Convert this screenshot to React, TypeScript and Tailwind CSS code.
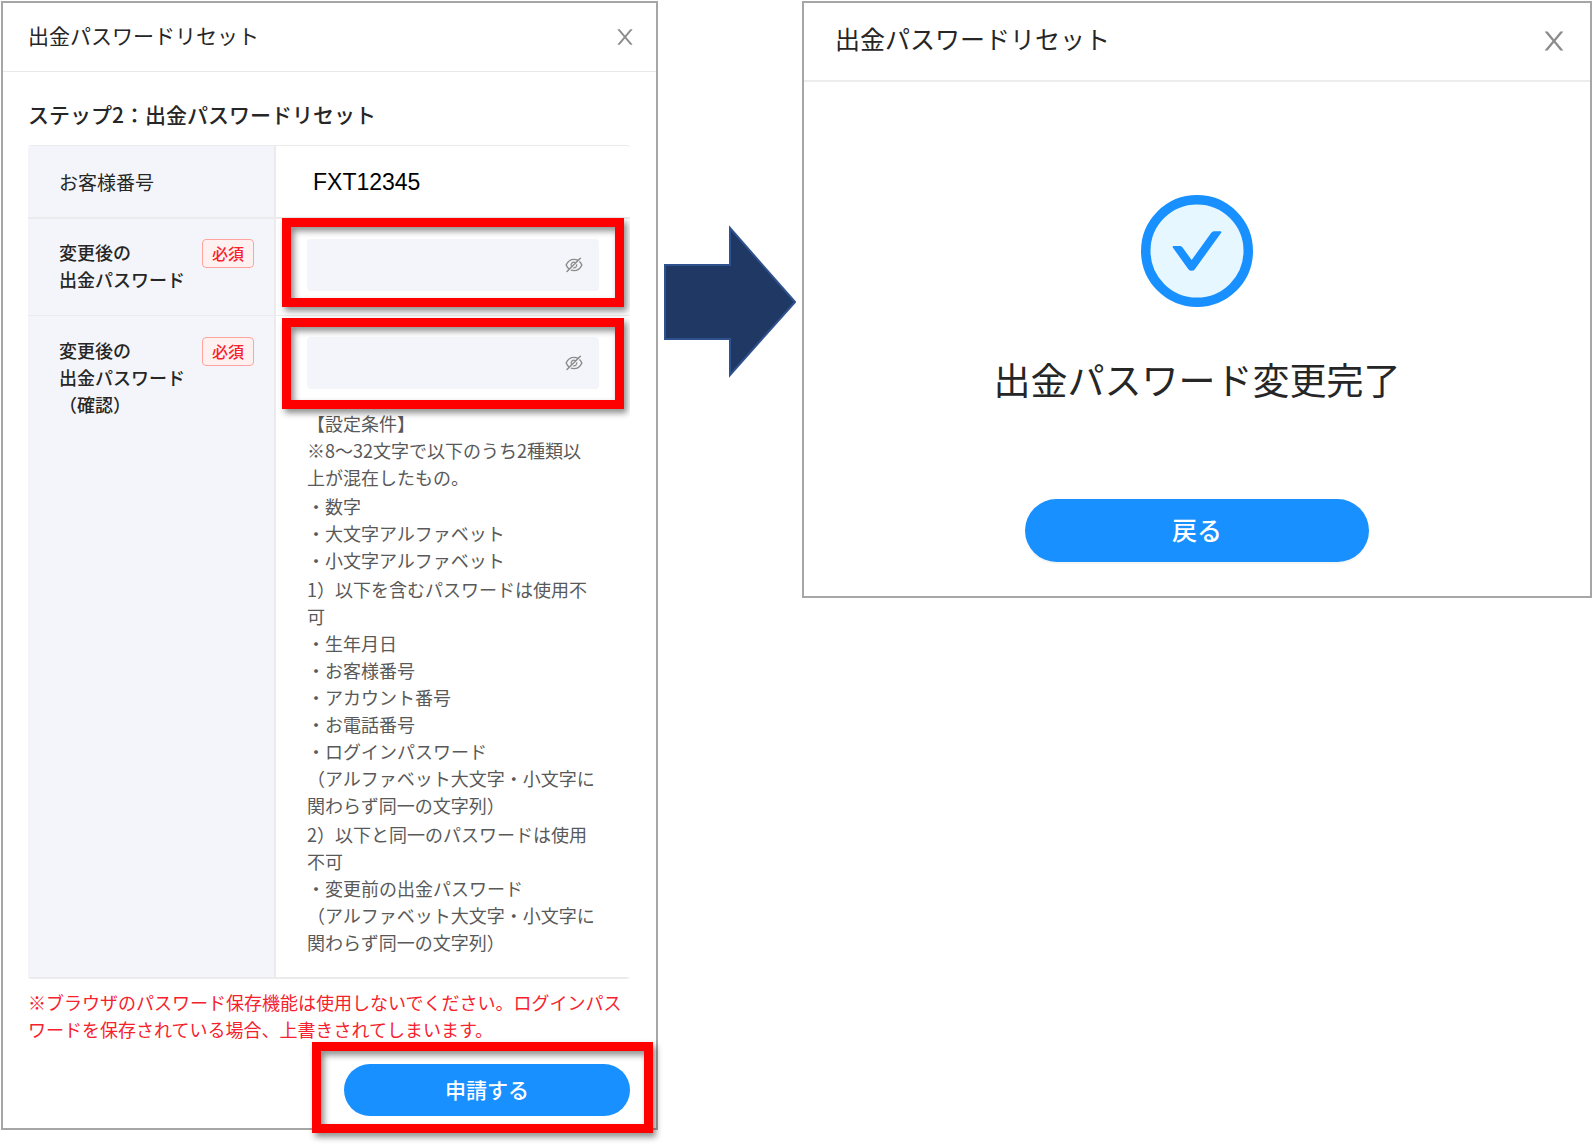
import React, { useState } from "react";
import { AiOutlineEyeInvisible } from "react-icons/ai";

const conditions: string[][] = [
  ["【設定条件】", "※8～32文字で以下のうち2種類以", "上が混在したもの。"],
  ["・数字", "・大文字アルファベット", "・小文字アルファベット"],
  [
    "1）以下を含むパスワードは使用不",
    "可",
    "・生年月日",
    "・お客様番号",
    "・アカウント番号",
    "・お電話番号",
    "・ログインパスワード",
    "（アルファベット大文字・小文字に",
    "関わらず同一の文字列）",
  ],
  [
    "2）以下と同一のパスワードは使用",
    "不可",
    "・変更前の出金パスワード",
    "（アルファベット大文字・小文字に",
    "関わらず同一の文字列）",
  ],
];

export default function App() {
  return (
    <main className="grid min-h-screen grid-cols-[657fr_144fr_790fr] items-start bg-white py-px pl-px font-['Noto_Sans_CJK_JP',sans-serif] text-[#262626]">
      <ResetForm />
      <div className="flex justify-center pt-[224px]">
        <Arrow />
      </div>
      <ResetComplete />
    </main>
  );
}

const ResetForm = () => {
  const [password, setPassword] = useState<string>("");
  const [confirmation, setConfirmation] = useState<string>("");

  return (
    <section className="border-2 border-[#a6a6a6]">
      <header className="flex h-[69px] items-start justify-between border-b border-[#e8e8e8] pt-[16px] pr-[19px] pl-[25px]">
        <h1 className="text-[21px] leading-[32px]">出金パスワードリセット</h1>
        <button type="button" aria-label="閉じる" className="py-1.5 text-[#8c8c8c]">
          <CloseIcon className="size-[24px]" />
        </button>
      </header>
      <form
        className="pt-[26px] pr-[26px] pb-[12px] pl-[25px]"
        onSubmit={(e) => e.preventDefault()}
      >
        <h2 className="mb-[15px] text-[21px] leading-[32px] font-medium">
          ステップ2：出金パスワードリセット
        </h2>
        <table className="w-full table-fixed border-separate border-spacing-0 overflow-hidden rounded border-t border-[#ebebeb] text-left text-[18px] leading-[27px]">
          <tbody>
            <tr>
              <th className="h-[73px] w-[248px] border-r-2 border-b-2 border-[#ebebeb] bg-[#f4f5fa] pl-[31px] text-[19px] font-normal">
                お客様番号
              </th>
              <td className="border-b-2 border-[#ebebeb] px-[37px] pt-0.5 font-['Liberation_Sans',Arial,sans-serif] text-[23px] text-black">
                FXT12345
              </td>
            </tr>
            <tr>
              <th className="border-r-2 border-b border-[#ebebeb] bg-[#f4f5fa] pt-[20px] pr-[20px] pl-[31px] align-top font-medium">
                <div className="flex items-start justify-between">
                  <label htmlFor="password">
                    変更後の
                    <br />
                    出金パスワード
                  </label>
                  <Required />
                </div>
              </th>
              <td className="border-b border-[#ebebeb] px-[31px] pt-[20px] pb-[24px] align-top">
                <div className="relative">
                  <PasswordInput
                    id="password"
                    value={password}
                    onChange={setPassword}
                  />
                  <Highlight className="-inset-x-[25px] -top-[21px] -bottom-[16px]" />
                </div>
              </td>
            </tr>
            <tr>
              <th className="border-r-2 border-b-2 border-[#ebebeb] bg-[#f4f5fa] pt-[21px] pr-[20px] pl-[31px] align-top font-medium">
                <div className="flex items-start justify-between">
                  <label htmlFor="confirmation">
                    変更後の
                    <br />
                    出金パスワード
                    <br />
                    （確認）
                  </label>
                  <Required />
                </div>
              </th>
              <td className="border-b-2 border-[#ebebeb] px-[31px] pt-[21px] pb-[21px] align-top">
                <div className="relative">
                  <PasswordInput
                    id="confirmation"
                    value={confirmation}
                    onChange={setConfirmation}
                  />
                  <Highlight className="-inset-x-[25px] -top-[19px] -bottom-[20px]" />
                </div>
                <div className="mt-[21px] flex flex-col gap-0.5 whitespace-nowrap text-[#595959]">
                  {conditions.map((lines, i) => (
                    <div key={i}>
                      {lines.map((line) => (
                        <p key={line}>{line}</p>
                      ))}
                    </div>
                  ))}
                </div>
              </td>
            </tr>
          </tbody>
        </table>
        <p className="mt-[10px] text-[18px] leading-[27px] text-[#f5222d]">
          ※ブラウザのパスワード保存機能は使用しないでください。ログインパスワードを保存されている場合、上書きされてしまいます。
        </p>
        <div className="mt-[21px] flex justify-end">
          <div className="relative">
            <button
              type="submit"
              className="block h-[52px] w-[286px] rounded-full bg-[#1890ff] text-[21px] font-medium text-white"
            >
              申請する
            </button>
            <Highlight className="-top-[22px] -right-[23px] -bottom-[17px] -left-[32px]" />
          </div>
        </div>
      </form>
    </section>
  );
};

const ResetComplete = () => {
  return (
    <section className="border-2 border-[#a6a6a6]">
      <header className="flex h-[79px] items-start justify-between border-b-2 border-[#ececec] pt-[17px] pr-[21px] pl-[31px]">
        <h1 className="text-[25px] leading-[36px]">出金パスワードリセット</h1>
        <button type="button" aria-label="閉じる" className="py-1.5 text-[#8c8c8c]">
          <CloseIcon className="size-[30px]" />
        </button>
      </header>
      <div className="flex flex-col items-center pt-[113px] pb-[34px]">
        <CheckCircle />
        <p className="mt-[44px] text-[37px] leading-[56px]">
          出金パスワード変更完了
        </p>
        <button
          type="button"
          className="mt-[92px] h-[63px] w-[344px] rounded-full bg-[#1890ff] pb-0.5 text-[25px] font-medium text-white shadow-[0_2px_0_rgba(0,0,0,0.04)]"
        >
          戻る
        </button>
      </div>
    </section>
  );
};

const PasswordInput = ({
  id,
  value,
  onChange,
}: {
  id: string;
  value: string;
  onChange: (value: string) => void;
}) => {
  const [visible, setVisible] = useState<boolean>(false);

  return (
    <div className="flex h-[52px] items-center rounded bg-[#f4f5fa] pr-[15px] pl-4">
      <input
        id={id}
        type={visible ? "text" : "password"}
        value={value}
        onChange={(e) => onChange(e.target.value)}
        className="h-full min-w-0 flex-1 bg-transparent outline-none"
      />
      <button
        type="button"
        aria-label="パスワードを表示"
        className="text-[#8c8c8c]"
        onClick={() => setVisible((prev) => !prev)}
      >
        <AiOutlineEyeInvisible className="size-[20px]" />
      </button>
    </div>
  );
};

const Required = () => (
  <span className="rounded border border-[#ffa39e] bg-[#fff1f0] px-[9px] text-[16px] leading-[27px] text-[#f5222d]">
    必須
  </span>
);

// Red frame laid over the field or button the user should look at
const Highlight = ({ className }: { className: string }) => (
  <div
    className={`pointer-events-none absolute border-[9px] border-[#ff0000] drop-shadow-[3px_4px_3px_rgba(0,0,0,0.45)] ${className}`}
  />
);

const CloseIcon = ({ className }: { className: string }) => (
  <svg viewBox="0 0 1024 1024" fill="currentColor" className={className}>
    <path d="M563.8 512l262.5-312.9c4.4-5.2.7-13.1-6.1-13.1h-79.8c-4.7 0-9.2 2.1-12.3 5.7L511.6 449.8 295.1 191.7c-3-3.6-7.5-5.7-12.3-5.7H203c-6.8 0-10.5 7.9-6.1 13.1L459.4 512 196.9 824.9A7.95 7.95 0 0 0 203 838h79.8c4.7 0 9.2-2.1 12.3-5.7l216.5-258.1 216.5 258.1c3 3.6 7.5 5.7 12.3 5.7h79.8c6.8 0 10.5-7.9 6.1-13.1L563.8 512z" />
  </svg>
);

const CheckCircle = () => (
  <svg viewBox="64 64 896 896" className="size-[112px]">
    <circle cx="512" cy="512" r="410" fill="#e6f7ff" stroke="#1890ff" strokeWidth="76" />
    <path
      fill="#1890ff"
      d="M699 353h-46.9c-10.2 0-19.9 4.9-25.9 13.3L469 584.3l-71.2-98.8c-6-8.3-15.6-13.3-25.9-13.3H325c-6.5 0-10.3 7.4-6.5 12.7l124.6 172.8a31.8 31.8 0 0 0 51.7 0l210.6-292c3.9-5.3.1-12.7-6.4-12.7z"
    />
  </svg>
);

const Arrow = () => (
  <svg viewBox="0 0 132 153" className="h-[153px] w-[132px]">
    <path
      d="M1 40H66V3L131 77L66 150V114H1Z"
      fill="#203864"
      stroke="#2f528f"
      strokeWidth="2"
    />
  </svg>
);
